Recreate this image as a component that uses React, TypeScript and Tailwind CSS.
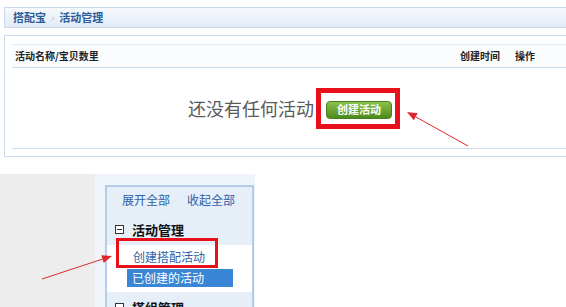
import React from 'react';

type ArrowProps = { x1: number; y1: number; x2: number; y2: number };

// thin red annotation arrow, tip at (x2, y2)
function Arrow({ x1, y1, x2, y2 }: ArrowProps) {
  const a = Math.atan2(y2 - y1, x2 - x1);
  const len = 10;
  const w = 4;
  const bx = x2 - Math.cos(a) * len;
  const by = y2 - Math.sin(a) * len;
  const p1 = `${bx + Math.sin(a) * w},${by - Math.cos(a) * w}`;
  const p2 = `${bx - Math.sin(a) * w},${by + Math.cos(a) * w}`;
  return (
    <g>
      <line x1={x1} y1={y1} x2={bx} y2={by} stroke="#e0262b" strokeWidth={1} />
      <polygon points={`${x2},${y2} ${p1} ${p2}`} fill="#e0262b" />
    </g>
  );
}

function MinusBox() {
  return (
    <span className="w-[9px] h-[9px] border border-[#333] bg-white flex items-center justify-center shrink-0">
      <span className="w-[5px] h-px bg-[#333]" />
    </span>
  );
}

export default function App() {
  return (
    <div className="relative w-[566px] h-[307px] overflow-hidden bg-white font-['Noto_Sans_CJK_SC','Liberation_Sans',sans-serif]">
      {/* Breadcrumb + list panel */}
      <div className="w-[600px] pt-[7px] pl-[4px]">
        <div className="h-[21px] border border-r-0 border-[#cad8ea] bg-gradient-to-b from-[#f6f9fd] to-[#e2ebf6] flex items-center pl-[8px] text-[11px] font-bold text-[#2c5c9c] leading-none">
          <span>搭配宝</span>
          <span className="mx-[5px] text-[#b8c4d2] font-normal">›</span>
          <span>活动管理</span>
        </div>

        <div className="mt-[7px] border border-r-0 border-[#cbd9ea] pt-[8px] pl-[7px] pb-[7px]">
          {/* Table head */}
          <div className="h-[24px] border-t border-b border-t-[#e2eaf4] border-b-[#cddcee] bg-[#fafcfe] flex items-center text-[10px] font-bold text-[#222] leading-none">
            <div className="flex-1 pl-[3px]">活动名称/宝贝数里</div>
            <div className="w-[55px]">创建时间</div>
            <div className="w-[85px]">操作</div>
          </div>

          {/* Empty state */}
          <div className="h-[81px] border-b border-[#cddcee] flex items-center justify-center pr-[24px]">
            <span className="text-[18px] text-[#5a5a5a] leading-none">还没有任何活动</span>
            <div className="ml-[2px] border-[5px] border-[#e8101a] pl-[5px] pr-[3px] pt-[8px] pb-[5px]">
              <button className="w-[66px] h-[18px] rounded-[4px] border border-[#4a7f1d] bg-gradient-to-b from-[#8cc24c] to-[#4d8a1c] text-white text-[11px] font-bold leading-none flex items-center justify-center">
                创建活动
              </button>
            </div>
          </div>
        </div>
      </div>

      {/* Side menu area */}
      <div className="mt-[17px] flex h-[140px]">
        <div className="w-[95px] bg-[#ededed]" />
        <div className="w-[160px] bg-[#eff4fa] pt-[11px] pl-[10px] pr-px">
          <div className="border-2 border-[#b3cce8] bg-white h-full">
            <div className="bg-[#e6eef8]">
              <div className="h-[26px] flex items-center pl-[15px] gap-[17px] text-[12px] text-[#2d62a8] leading-none">
                <span>展开全部</span>
                <span>收起全部</span>
              </div>
              <div className="h-[32px] flex items-center pl-[8px] gap-[8px]">
                <MinusBox />
                <span className="text-[13px] font-bold text-[#111] leading-none">活动管理</span>
              </div>
            </div>

            <div className="pt-[3px] pb-[5px] text-[12px] leading-none">
              <div className="relative h-[18px] flex items-center pl-[26px] text-[#2d62a8]">
                创建搭配活动
                <div className="absolute left-[9px] top-[-10px] w-[102px] h-[30px] border-[3px] border-[#e8101a]" />
              </div>
              <div className="mt-[3px] ml-[20px] w-[106px] h-[18px] bg-[#3a86d6] text-white flex items-center pl-[5px]">
                已创建的活动
              </div>
            </div>

            <div className="bg-[#e6eef8] h-[30px] flex items-center pl-[8px] gap-[8px]">
              <MinusBox />
              <span className="text-[13px] font-bold text-[#111] leading-none">搭组管理</span>
            </div>
          </div>
        </div>
      </div>

      {/* Annotation arrows */}
      <svg className="absolute inset-0 pointer-events-none" width={566} height={307}>
        <Arrow x1={468} y1={146} x2={407} y2={112} />
        <Arrow x1={42} y1={279} x2={112} y2={256} />
      </svg>
    </div>
  );
}
